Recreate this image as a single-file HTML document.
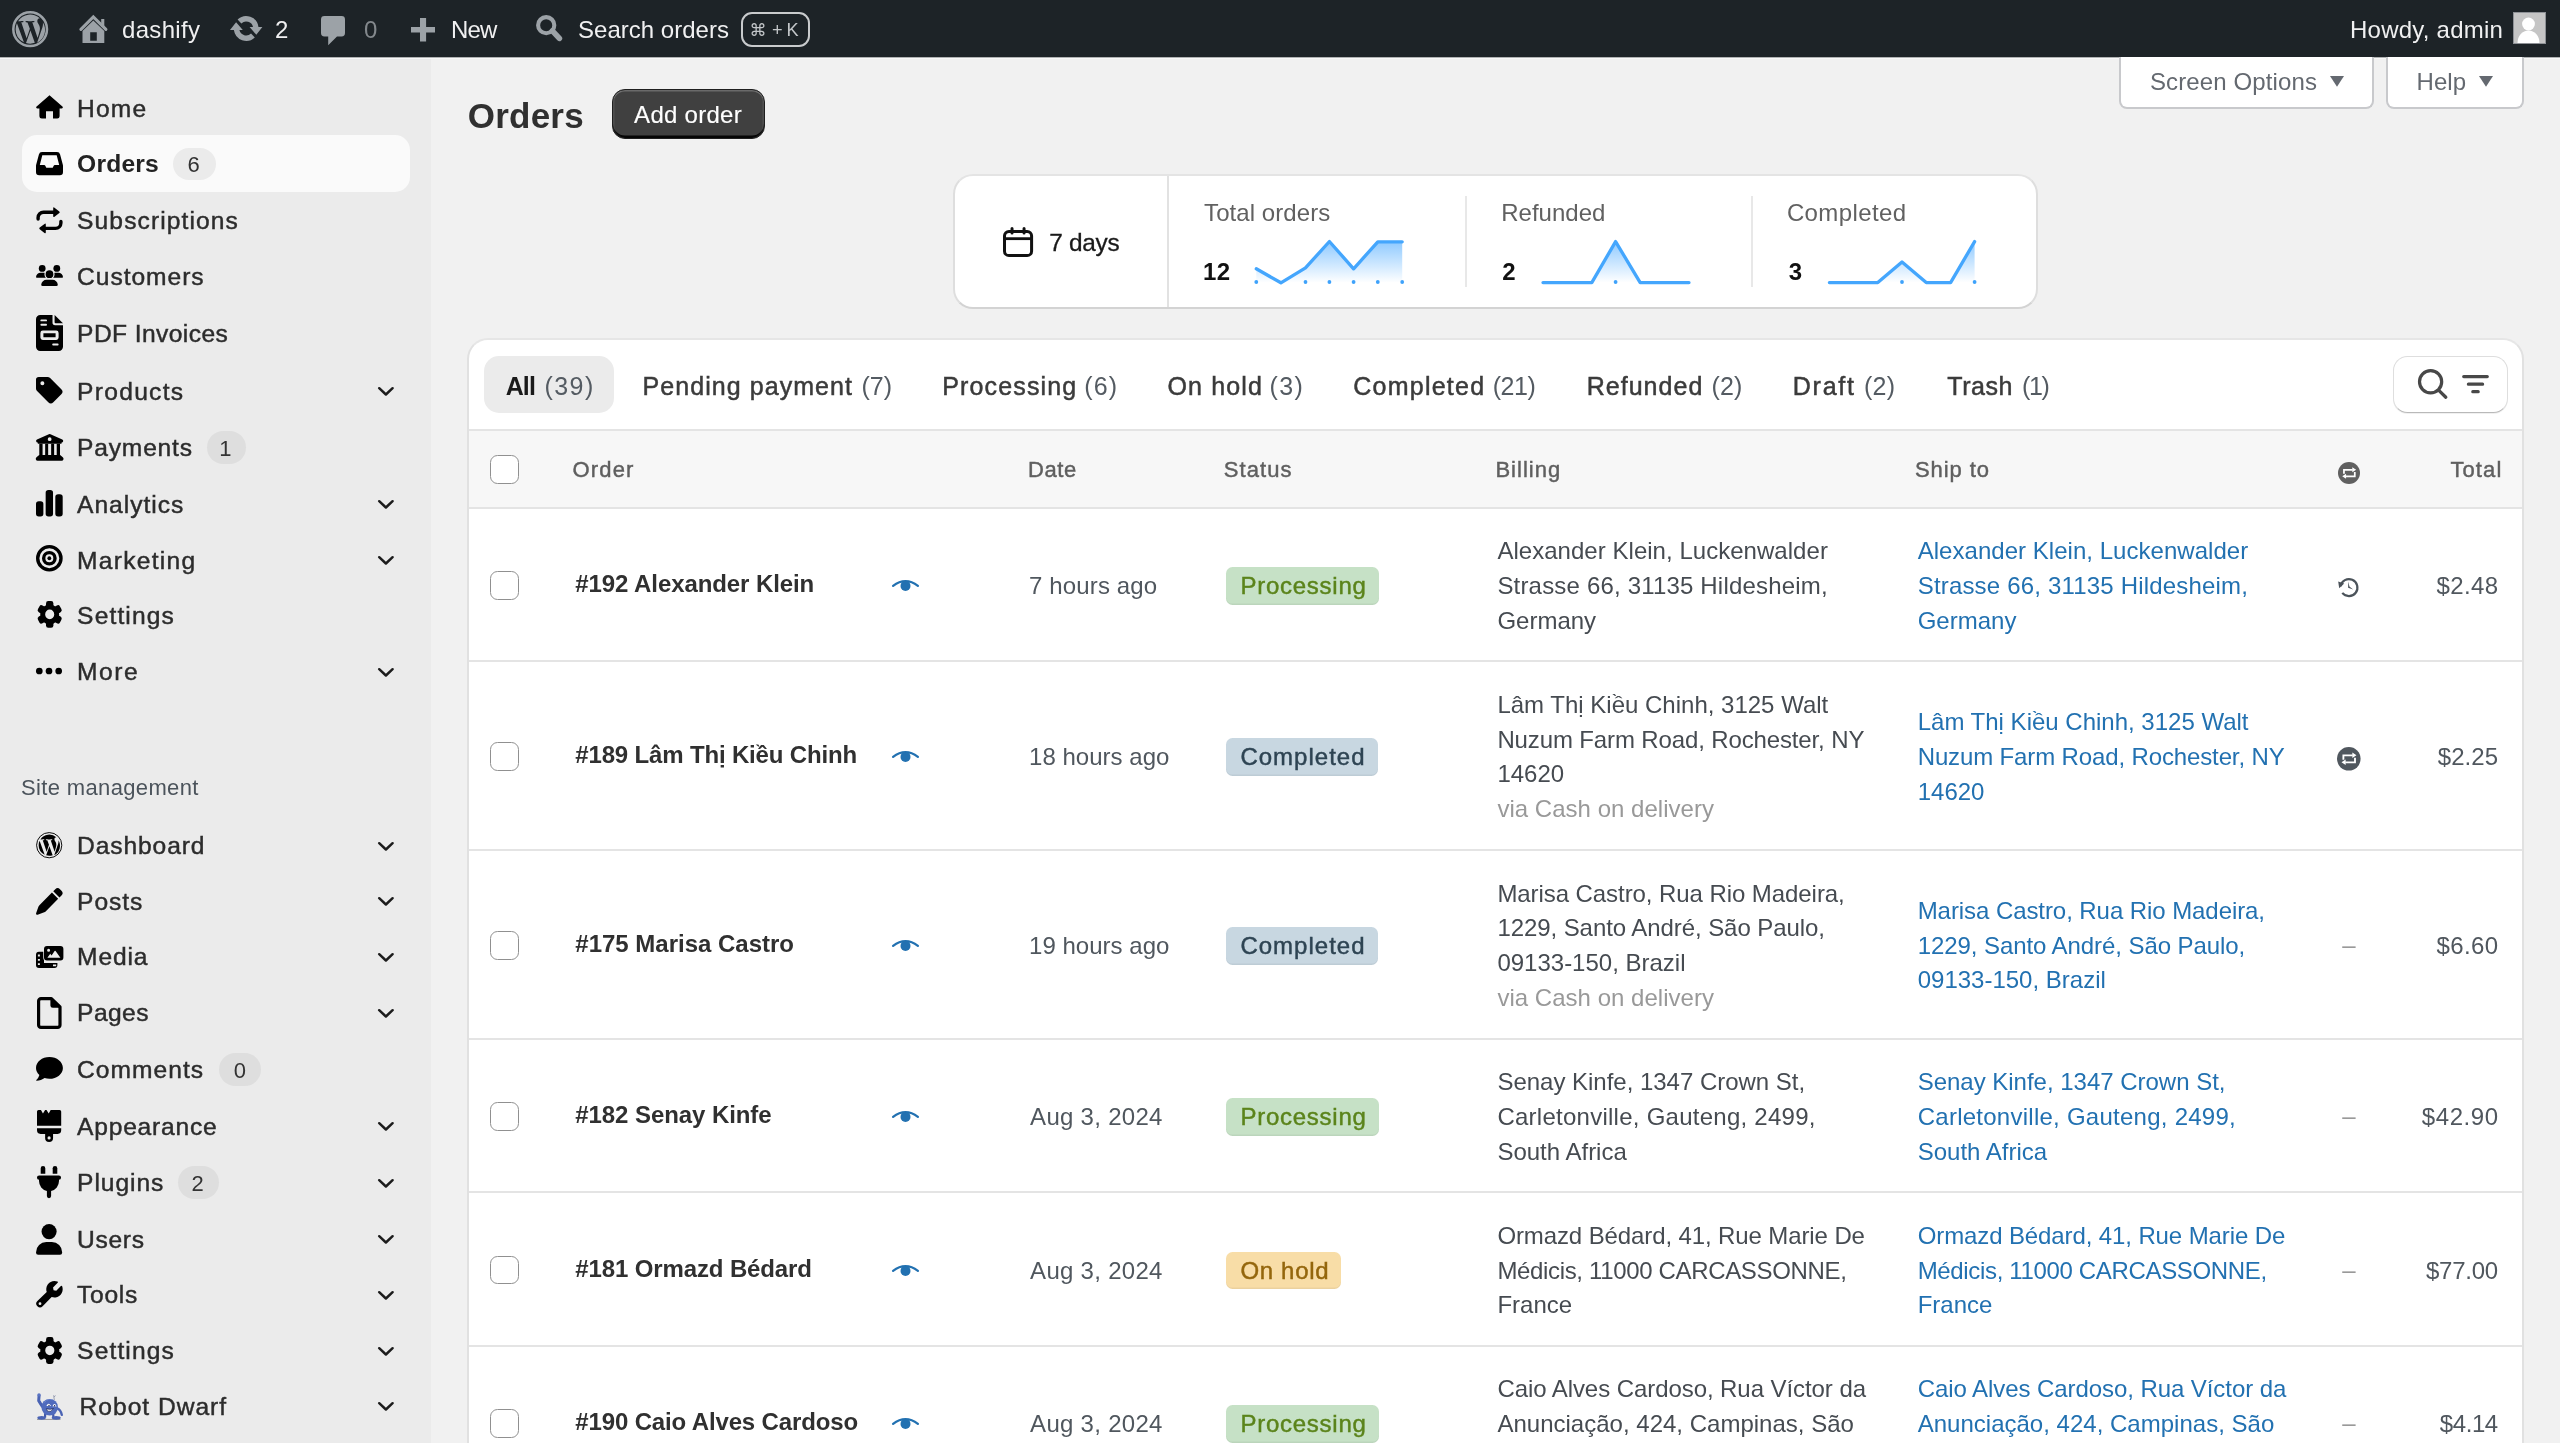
<!DOCTYPE html>
<html lang="en"><head><meta charset="utf-8"><title>Orders ‹ dashify — WordPress</title>
<style>
html,body{margin:0;padding:0}
body{width:2560px;height:1443px;overflow:hidden;position:relative;background:#f1f1f1;font-family:"Liberation Sans", "DejaVu Sans", sans-serif;}
.t{position:absolute;white-space:nowrap;line-height:1;margin:0;padding:0}
#root{position:absolute;left:0;top:0;width:2560px;height:1443px;overflow:hidden;will-change:transform}
.a{position:absolute}
svg{position:absolute;overflow:visible}
</style></head><body>
<div id="root">
<div class="a" style="left:0;top:0;width:2560px;height:57px;background:#1d2327"></div>
<svg style="left:12.40px;top:10.70px" width="36.30" height="36.30" viewBox="0 0 36 36" preserveAspectRatio="none"><circle cx="18" cy="18" r="16.7" fill="none" stroke="#9ca2a7" stroke-width="2.5"/><path d="M3.6,18 A14.4,14.4 0 0 1 4.9,12.1 L11.8,30.9 A14.4,14.4 0 0 1 3.6,18 Z M27.7,17.3 C27.7,15.5 27.1,14.3 26.5,13.3 C25.8,12.1 25.1,11.1 25.1,9.9 C25.1,8.6 26.1,7.3 27.5,7.3 L27.7,7.3 A14.4,14.4 0 0 0 6,10.1 L6.9,10.1 C8.4,10.1 10.8,9.9 10.8,9.9 C11.6,9.9 11.7,11 10.9,11.1 C10.9,11.1 10.1,11.2 9.2,11.2 L14.5,27 L17.7,17.5 L15.4,11.3 C14.6,11.2 13.9,11.1 13.9,11.1 C13.1,11.1 13.2,9.9 14,9.9 C14,9.9 16.4,10.1 17.8,10.1 C19.3,10.1 21.7,9.9 21.7,9.9 C22.5,9.9 22.6,11 21.8,11.1 C21.8,11.1 21,11.2 20.1,11.2 L25.4,26.8 L26.8,22 C27.4,20 27.7,18.6 27.7,17.3 Z M18.3,19.3 L13.9,31.8 A14.4,14.4 0 0 0 22.7,31.6 L22.6,31.4 Z M30.6,11.1 C30.7,11.6 30.7,12.1 30.7,12.7 C30.7,14.3 30.4,16 29.5,18.2 L24.9,31.6 A14.4,14.4 0 0 0 30.6,11.1 Z" fill="#9ca2a7"/></svg>
<svg style="left:80.00px;top:15.00px" width="27.00" height="28.00" viewBox="0 0 27 28" preserveAspectRatio="none"><path d="M0.9,14.3 L13.3,1.9 L25.9,14.3" fill="none" stroke="#9ca2a7" stroke-width="3.1" stroke-linecap="round" stroke-linejoin="miter"/><rect x="21.2" y="4" width="3.1" height="8" fill="#9ca2a7"/><path fill-rule="evenodd" d="M2.5,27.9 V16.1 L13.3,5.6 L24.3,16.1 V27.9 Z M10.2,17.3 V25.8 H16.8 V17.3 Z" fill="#9ca2a7"/></svg>
<svg style="left:230.00px;top:16.30px" width="32.40" height="25.00" viewBox="0 0 32.4 25" preserveAspectRatio="none"><g transform="translate(16.2,12.5)"><path d="M-8.61,-8.92 A12.4,12.4 0 0 1 12.30,-1.6 L16.2,-1.6 L10.1,6.3 L3.4,-1.6 L6.81,-1.6 A7.0,7.0 0 0 0 -4.86,-5.04 Z M8.61,8.92 A12.4,12.4 0 0 1 -12.30,1.6 L-16.2,1.6 L-10.1,-6.3 L-3.4,1.6 L-6.81,1.6 A7.0,7.0 0 0 0 4.86,5.04 Z" fill="#9ca2a7"/></g></svg>
<svg style="left:320.90px;top:15.90px" width="24.00" height="29.20" viewBox="0 0 24 29.2" preserveAspectRatio="none"><path d="M3.4,0 H20.6 A3.4,3.4 0 0 1 24,3.4 V17 A3.4,3.4 0 0 1 20.6,20.4 H16 L7.2,29.2 V20.4 H3.4 A3.4,3.4 0 0 1 0,17 V3.4 A3.4,3.4 0 0 1 3.4,0 Z" fill="#9ca2a7"/></svg>
<svg style="left:410.90px;top:18.10px" width="24.00" height="23.40" viewBox="0 0 24 23.4" preserveAspectRatio="none"><path d="M9,0 H15.1 V8.9 H24 V14.5 H15.1 V23.4 H9 V14.5 H0 V8.9 H9 Z" fill="#9ca2a7"/></svg>
<svg style="left:536.00px;top:15.00px" width="26.00" height="26.60" viewBox="0 0 26 26.6" preserveAspectRatio="none"><circle cx="10.2" cy="10.2" r="8.1" fill="none" stroke="#9ca2a7" stroke-width="4.1"/><path d="M16.4,15.8 L23.4,23.4" stroke="#9ca2a7" stroke-width="5.6" stroke-linecap="round"/></svg>
<div class="a" style="left:741px;top:12.1px;width:68.5px;height:34.9px;box-sizing:border-box;border:2px solid #c9cbcd;border-radius:11px"></div>
<div class="a" style="left:2513.1px;top:11.8px;width:32.8px;height:32px;box-sizing:border-box;background:#c5c5c5;border:1.7px solid #8e9196;overflow:hidden"><svg style="left:0;top:0" width="29.4" height="28.6" viewBox="0 0 29.4 28.6"><circle cx="14.5" cy="11" r="6.4" fill="#fff"/><ellipse cx="14.5" cy="30" rx="11" ry="12.6" fill="#fff"/></svg></div>
<div class="a" style="left:0;top:57px;width:431px;height:1386px;background:#ebebeb"></div>
<div class="a" style="left:0;top:57px;width:2560px;height:1px;background:#b0b2b3"></div>
<div class="a" style="left:0;top:58px;width:2560px;height:1px;background:#f8f8f8"></div>
<div class="a" style="left:21.5px;top:135px;width:388.5px;height:57.2px;background:#fafafa;border-radius:15px"></div>
<svg style="left:35.90px;top:95.00px" width="27.00" height="23.60" viewBox="0 0 27 24" preserveAspectRatio="none"><path d="M13.5,0.3 L26.4,11.6 A1.25,1.25 0 0 1 25.6,13.8 H23.6 V21.6 A2.4,2.4 0 0 1 21.2,24 H17 V16.6 H10 V24 H5.8 A2.4,2.4 0 0 1 3.4,21.6 V13.8 H1.4 A1.25,1.25 0 0 1 0.6,11.6 Z" fill="#000"/></svg>
<svg style="left:35.90px;top:152.00px" width="27.00" height="23.20" viewBox="0 0 27 23.4" preserveAspectRatio="none"><path fill-rule="evenodd" d="M6,0 H21 A3.2,3.2 0 0 1 24.1,2.4 L26.9,13 Q27,13.5 27,14 V20.2 A3.2,3.2 0 0 1 23.8,23.4 H3.2 A3.2,3.2 0 0 1 0,20.2 V14 Q0,13.5 0.1,13 L2.9,2.4 A3.2,3.2 0 0 1 6,0 Z M6.3,3.4 L3.8,13.2 H8.2 A1.2,1.2 0 0 1 9.3,13.9 L10.3,16 H16.7 L17.7,13.9 A1.2,1.2 0 0 1 18.8,13.2 H23.2 L20.7,3.4 Z" fill="#000"/></svg>
<div class="a" style="left:173.0px;top:147.5px;width:43.4px;height:32.8px;border-radius:16.4px;background:#ebebeb"></div>
<svg style="left:36.00px;top:207.00px" width="27.00" height="26.60" viewBox="0 0 27 26.6" preserveAspectRatio="none"><g fill="none" stroke="#000" stroke-width="3.4" stroke-linecap="round" stroke-linejoin="round"><path d="M2.1,12 V10.6 A5.4,5.4 0 0 1 7.5,5.2 H17.6"/><path d="M24.9,14.4 V16 A5.4,5.4 0 0 1 19.5,21.4 H9.4"/></g><path d="M17.2,1.3 Q17.2,-0.3 18.5,0.7 L23.3,4.4 Q24.3,5.2 23.3,6 L18.5,9.7 Q17.2,10.7 17.2,9.1 Z M9.8,17.5 Q9.8,15.9 8.5,16.9 L3.7,20.6 Q2.7,21.4 3.7,22.2 L8.5,25.9 Q9.8,26.9 9.8,25.3 Z" fill="#000"/></svg>
<svg style="left:36.00px;top:265.30px" width="27.00" height="21.10" viewBox="0 0 27 21.2" preserveAspectRatio="none"><g fill="#000"><circle cx="6.2" cy="3.5" r="3.4"/><circle cx="20.8" cy="3.5" r="3.4"/><path d="M0,12.4 A4.7,4.7 0 0 1 4.7,7.7 H7.6 Q8.6,7.7 9.4,8.1 Q8.6,10.4 9.9,12.8 H0.9 A0.9,0.9 0 0 1 0,12.4 Z"/><path d="M27,12.4 A4.7,4.7 0 0 0 22.3,7.7 H19.4 Q18.4,7.7 17.6,8.1 Q18.4,10.4 17.1,12.8 H26.1 A0.9,0.9 0 0 0 27,12.4 Z"/><circle cx="13.5" cy="9.2" r="4.5" stroke="#ebebeb" stroke-width="1.2"/><path d="M5.2,19.8 A5.4,5.4 0 0 1 10.6,14.8 H16.4 A5.4,5.4 0 0 1 21.8,19.8 A1.4,1.4 0 0 1 20.4,21.2 H6.6 A1.4,1.4 0 0 1 5.2,19.8 Z"/></g></svg>
<svg style="left:36.00px;top:315.30px" width="27.00" height="35.90" viewBox="0 0 27 36" preserveAspectRatio="none"><path d="M4.2,0 H16.5 V7.6 A2.6,2.6 0 0 0 19.1,10.2 H27 V31.8 A4.2,4.2 0 0 1 22.8,36 H4.2 A4.2,4.2 0 0 1 0,31.8 V4.2 A4.2,4.2 0 0 1 4.2,0 Z M18.6,0 L27,8.2 H19.6 A1,1 0 0 1 18.6,7.2 Z" fill="#000"/><g fill="#ebebeb"><rect x="4.4" y="4.4" width="6.6" height="1.9" rx="0.9"/><rect x="4.4" y="8.8" width="6.6" height="1.9" rx="0.9"/><rect x="16.2" y="28.6" width="6.4" height="1.9" rx="0.9"/><path fill-rule="evenodd" d="M6.8,15.6 H20.2 A2.4,2.4 0 0 1 22.6,18 V22.6 A2.4,2.4 0 0 1 20.2,25 H6.8 A2.4,2.4 0 0 1 4.4,22.6 V18 A2.4,2.4 0 0 1 6.8,15.6 Z M7.4,18.2 V22.4 H19.6 V18.2 Z"/></g></svg>
<svg style="left:35.70px;top:377.20px" width="26.50" height="26.40" viewBox="0 0 26.6 26.6" preserveAspectRatio="none"><path fill-rule="evenodd" d="M0,2.8 A2.8,2.8 0 0 1 2.8,0 H11.6 A3.6,3.6 0 0 1 14.2,1.1 L25.4,12.3 A3.6,3.6 0 0 1 25.4,17.4 L17.4,25.4 A3.6,3.6 0 0 1 12.3,25.4 L1.1,14.2 A3.6,3.6 0 0 1 0,11.6 Z M6.4,4.4 A2,2 0 1 0 6.4,8.4 A2,2 0 1 0 6.4,4.4 Z" fill="#000"/></svg>
<svg style="left:378.40px;top:387.00px" width="15.80" height="8.90" viewBox="0 0 16 9" preserveAspectRatio="none"><path d="M1.2,1.2 L8,7.6 L14.8,1.2" fill="none" stroke="#1c1c1c" stroke-width="2.5" stroke-linecap="round" stroke-linejoin="round"/></svg>
<svg style="left:35.70px;top:434.20px" width="27.30" height="26.70" viewBox="0 0 27.4 26.8" preserveAspectRatio="none"><path fill-rule="evenodd" d="M12.9,0.2 Q13.7,-0.2 14.5,0.2 L26.4,5.4 A1.7,1.7 0 0 1 25.7,8.6 V9 A0.9,0.9 0 0 1 24.8,9.9 H2.6 A0.9,0.9 0 0 1 1.7,9 V8.6 A1.7,1.7 0 0 1 1,5.4 Z M13.7,3.3 A1.9,1.9 0 1 0 13.7,7.1 A1.9,1.9 0 1 0 13.7,3.3 Z" fill="#000"/><g fill="#000"><rect x="3.3" y="9.8" width="3.3" height="12"/><rect x="9.2" y="9.8" width="3" height="12"/><rect x="15.2" y="9.8" width="3" height="12"/><rect x="20.8" y="9.8" width="3.3" height="12"/><path d="M3.2,21 H24.2 L26.9,23.4 A1.9,1.9 0 0 1 25.7,26.8 H1.7 A1.9,1.9 0 0 1 0.5,23.4 Z"/></g></svg>
<div class="a" style="left:206.8px;top:431.4px;width:39.0px;height:32.8px;border-radius:16.4px;background:#dedede"></div>
<svg style="left:36.00px;top:489.80px" width="26.70" height="26.60" viewBox="0 0 26.8 26.8" preserveAspectRatio="none"><g fill="#000"><rect x="0" y="11.4" width="7.4" height="15.4" rx="2.8"/><rect x="9.7" y="0" width="7.4" height="26.8" rx="2.8"/><rect x="19.4" y="4.2" width="7.4" height="22.6" rx="2.8"/></g></svg>
<svg style="left:378.40px;top:500.10px" width="15.80" height="8.90" viewBox="0 0 16 9" preserveAspectRatio="none"><path d="M1.2,1.2 L8,7.6 L14.8,1.2" fill="none" stroke="#1c1c1c" stroke-width="2.5" stroke-linecap="round" stroke-linejoin="round"/></svg>
<svg style="left:36.00px;top:545.30px" width="26.70" height="26.50" viewBox="0 0 26.8 26.8" preserveAspectRatio="none"><circle cx="13.4" cy="13.4" r="11.7" fill="none" stroke="#000" stroke-width="3.4"/><circle cx="13.4" cy="13.4" r="5.7" fill="none" stroke="#000" stroke-width="3.4"/><circle cx="13.4" cy="13.4" r="1.9" fill="#000"/></svg>
<svg style="left:378.40px;top:556.30px" width="15.80" height="8.90" viewBox="0 0 16 9" preserveAspectRatio="none"><path d="M1.2,1.2 L8,7.6 L14.8,1.2" fill="none" stroke="#1c1c1c" stroke-width="2.5" stroke-linecap="round" stroke-linejoin="round"/></svg>
<svg style="left:36.70px;top:601.10px" width="25.40" height="26.80" viewBox="0 0 26.8 26.8" preserveAspectRatio="none"><circle cx="13.4" cy="13.4" r="7.4" fill="none" stroke="#000" stroke-width="5.2"/><rect x="9.5" y="0" width="7.8" height="8" rx="2.4" fill="#000" transform="rotate(0 13.4 13.4)"/><rect x="9.5" y="0" width="7.8" height="8" rx="2.4" fill="#000" transform="rotate(60 13.4 13.4)"/><rect x="9.5" y="0" width="7.8" height="8" rx="2.4" fill="#000" transform="rotate(120 13.4 13.4)"/><rect x="9.5" y="0" width="7.8" height="8" rx="2.4" fill="#000" transform="rotate(180 13.4 13.4)"/><rect x="9.5" y="0" width="7.8" height="8" rx="2.4" fill="#000" transform="rotate(240 13.4 13.4)"/><rect x="9.5" y="0" width="7.8" height="8" rx="2.4" fill="#000" transform="rotate(300 13.4 13.4)"/></svg>
<svg style="left:36.40px;top:666.50px" width="25.80" height="8.00" viewBox="0 0 25.8 8" preserveAspectRatio="none"><g fill="#000"><circle cx="3.3" cy="4" r="3.35"/><circle cx="13" cy="4" r="3.35"/><circle cx="22.7" cy="4" r="3.35"/></g></svg>
<svg style="left:378.40px;top:667.50px" width="15.80" height="8.90" viewBox="0 0 16 9" preserveAspectRatio="none"><path d="M1.2,1.2 L8,7.6 L14.8,1.2" fill="none" stroke="#1c1c1c" stroke-width="2.5" stroke-linecap="round" stroke-linejoin="round"/></svg>
<svg style="left:36.20px;top:832.40px" width="26.40" height="26.40" viewBox="0 0 36 36" preserveAspectRatio="none"><circle cx="18" cy="18" r="17.2" fill="none" stroke="#000" stroke-width="1.3"/><path d="M3.6,18 A14.4,14.4 0 0 1 4.9,12.1 L11.8,30.9 A14.4,14.4 0 0 1 3.6,18 Z M27.7,17.3 C27.7,15.5 27.1,14.3 26.5,13.3 C25.8,12.1 25.1,11.1 25.1,9.9 C25.1,8.6 26.1,7.3 27.5,7.3 L27.7,7.3 A14.4,14.4 0 0 0 6,10.1 L6.9,10.1 C8.4,10.1 10.8,9.9 10.8,9.9 C11.6,9.9 11.7,11 10.9,11.1 C10.9,11.1 10.1,11.2 9.2,11.2 L14.5,27 L17.7,17.5 L15.4,11.3 C14.6,11.2 13.9,11.1 13.9,11.1 C13.1,11.1 13.2,9.9 14,9.9 C14,9.9 16.4,10.1 17.8,10.1 C19.3,10.1 21.7,9.9 21.7,9.9 C22.5,9.9 22.6,11 21.8,11.1 C21.8,11.1 21,11.2 20.1,11.2 L25.4,26.8 L26.8,22 C27.4,20 27.7,18.6 27.7,17.3 Z M18.3,19.3 L13.9,31.8 A14.4,14.4 0 0 0 22.7,31.6 L22.6,31.4 Z M30.6,11.1 C30.7,11.6 30.7,12.1 30.7,12.7 C30.7,14.3 30.4,16 29.5,18.2 L24.9,31.6 A14.4,14.4 0 0 0 30.6,11.1 Z" fill="#000"/></svg>
<svg style="left:378.40px;top:841.70px" width="15.80" height="8.90" viewBox="0 0 16 9" preserveAspectRatio="none"><path d="M1.2,1.2 L8,7.6 L14.8,1.2" fill="none" stroke="#1c1c1c" stroke-width="2.5" stroke-linecap="round" stroke-linejoin="round"/></svg>
<svg style="left:36.20px;top:887.70px" width="26.70" height="26.90" viewBox="0 0 26.6 26.6" preserveAspectRatio="none"><path d="M19.2,1.2 A3.3,3.3 0 0 1 23.9,1.2 L25.4,2.7 A3.3,3.3 0 0 1 25.4,7.4 L23.4,9.4 L17.2,3.2 Z M15.9,4.5 L22.1,10.7 L9.6,23.2 Q9,23.8 8.2,24.1 L1.6,26.5 A1.2,1.2 0 0 1 0.1,25 L2.5,18.4 Q2.8,17.6 3.4,17 Z" fill="#000"/></svg>
<svg style="left:378.40px;top:897.10px" width="15.80" height="8.90" viewBox="0 0 16 9" preserveAspectRatio="none"><path d="M1.2,1.2 L8,7.6 L14.8,1.2" fill="none" stroke="#1c1c1c" stroke-width="2.5" stroke-linecap="round" stroke-linejoin="round"/></svg>
<svg style="left:35.90px;top:945.90px" width="27.40" height="22.00" viewBox="0 0 27.4 22" preserveAspectRatio="none"><path fill-rule="evenodd" d="M3,5.8 H8 V17 H21.4 V19 A3,3 0 0 1 18.4,22 H3 A3,3 0 0 1 0,19 V8.8 A3,3 0 0 1 3,5.8 Z M1.9,8.6 V10.4 H3.9 V8.6 Z M1.9,12.9 V14.7 H3.9 V12.9 Z M1.9,17.3 V19.1 H3.9 V17.3 Z M17,18.6 V20.2 H19,20.2 V18.6 Z" fill="#000"/><path fill-rule="evenodd" d="M11,0 H24.4 A3,3 0 0 1 27.4,3 V11.6 A3,3 0 0 1 24.4,14.6 H11 A3,3 0 0 1 8,11.6 V3 A3,3 0 0 1 11,0 Z M18.6,5 L15.6,9.4 L14.2,7.8 L11.4,11.8 H24.4 L19.6,5 Q19.1,4.4 18.6,5 Z M12.6,2.8 A1.5,1.5 0 1 0 12.6,5.8 A1.5,1.5 0 1 0 12.6,2.8 Z" fill="#000" stroke="#ebebeb" stroke-width="1.5" paint-order="stroke"/></svg>
<svg style="left:378.40px;top:952.70px" width="15.80" height="8.90" viewBox="0 0 16 9" preserveAspectRatio="none"><path d="M1.2,1.2 L8,7.6 L14.8,1.2" fill="none" stroke="#1c1c1c" stroke-width="2.5" stroke-linecap="round" stroke-linejoin="round"/></svg>
<svg style="left:37.00px;top:996.60px" width="24.60" height="32.00" viewBox="0 0 24.6 32" preserveAspectRatio="none"><path d="M4,1.6 H14.4 L23,10 V27.8 A2.4,2.4 0 0 1 20.6,30.4 H4 A2.4,2.4 0 0 1 1.6,27.8 V4 A2.4,2.4 0 0 1 4,1.6 Z" fill="none" stroke="#000" stroke-width="3.2" stroke-linejoin="round"/><path d="M13.4,1.6 V8.4 A2.4,2.4 0 0 0 15.8,10.8 H23 L14.4,1.6 Z" fill="#000"/></svg>
<svg style="left:378.40px;top:1008.90px" width="15.80" height="8.90" viewBox="0 0 16 9" preserveAspectRatio="none"><path d="M1.2,1.2 L8,7.6 L14.8,1.2" fill="none" stroke="#1c1c1c" stroke-width="2.5" stroke-linecap="round" stroke-linejoin="round"/></svg>
<svg style="left:36.00px;top:1057.30px" width="26.90" height="23.80" viewBox="0 0 26.6 23.6" preserveAspectRatio="none"><path d="M13.3,0 C20.6,0 26.6,4.8 26.6,10.8 C26.6,16.8 20.6,21.6 13.3,21.6 C11.6,21.6 10,21.3 8.5,20.9 C6.4,22.5 3.4,23.5 0.7,23.6 A0.5,0.5 0 0 1 0.3,22.8 C1.7,21.5 2.9,19.4 3.3,17.8 C1.2,15.9 0,13.5 0,10.8 C0,4.8 6,0 13.3,0 Z" fill="#000"/></svg>
<div class="a" style="left:218.8px;top:1053.2px;width:41.9px;height:32.8px;border-radius:16.4px;background:#dedede"></div>
<svg style="left:37.30px;top:1109.70px" width="24.20" height="32.10" viewBox="0 0 24.4 32.2" preserveAspectRatio="none"><path d="M1.6,0 H4 L6,3.6 L8.2,0 H9.6 L11.8,3.6 L13.8,0 H22.8 A1.6,1.6 0 0 1 24.4,1.6 V15.8 H0 V1.6 A1.6,1.6 0 0 1 1.6,0 Z" fill="#000"/><path fill-rule="evenodd" d="M0,18.4 H24.4 V20.4 A3.6,3.6 0 0 1 20.8,24 H16.2 V28.2 A4,4 0 0 1 8.2,28.2 V24 H3.6 A3.6,3.6 0 0 1 0,20.4 Z M12.2,26.4 A1.6,1.6 0 1 0 12.2,29.6 A1.6,1.6 0 1 0 12.2,26.4 Z" fill="#000"/></svg>
<svg style="left:378.40px;top:1122.40px" width="15.80" height="8.90" viewBox="0 0 16 9" preserveAspectRatio="none"><path d="M1.2,1.2 L8,7.6 L14.8,1.2" fill="none" stroke="#1c1c1c" stroke-width="2.5" stroke-linecap="round" stroke-linejoin="round"/></svg>
<svg style="left:37.40px;top:1166.40px" width="24.00" height="32.20" viewBox="0 0 24 32" preserveAspectRatio="none"><g fill="#000"><path d="M3.7,2.3 A2.3,2.3 0 0 1 8.3,2.3 V7.8 H3.7 Z"/><path d="M15.7,2.3 A2.3,2.3 0 0 1 20.3,2.3 V7.8 H15.7 Z"/><rect x="0" y="9.4" width="24" height="4.3" rx="2.1"/><path d="M2,12.6 H22 V15 A10,10 0 0 1 14.1,24.8 V29.9 A2.1,2.1 0 0 1 9.9,29.9 V24.8 A10,10 0 0 1 2,15 Z"/></g></svg>
<svg style="left:378.40px;top:1178.50px" width="15.80" height="8.90" viewBox="0 0 16 9" preserveAspectRatio="none"><path d="M1.2,1.2 L8,7.6 L14.8,1.2" fill="none" stroke="#1c1c1c" stroke-width="2.5" stroke-linecap="round" stroke-linejoin="round"/></svg>
<div class="a" style="left:177.9px;top:1166.2px;width:41.6px;height:32.8px;border-radius:16.4px;background:#dedede"></div>
<svg style="left:36.20px;top:1223.90px" width="26.20" height="30.70" viewBox="0 0 26.4 30.6" preserveAspectRatio="none"><g fill="#000"><circle cx="13.2" cy="7.6" r="7.6"/><path d="M0,28.4 A10.4,10.4 0 0 1 10.4,18 H16 A10.4,10.4 0 0 1 26.4,28.4 A2.2,2.2 0 0 1 24.2,30.6 H2.2 A2.2,2.2 0 0 1 0,28.4 Z"/></g></svg>
<svg style="left:378.40px;top:1235.10px" width="15.80" height="8.90" viewBox="0 0 16 9" preserveAspectRatio="none"><path d="M1.2,1.2 L8,7.6 L14.8,1.2" fill="none" stroke="#1c1c1c" stroke-width="2.5" stroke-linecap="round" stroke-linejoin="round"/></svg>
<svg style="left:36.20px;top:1281.30px" width="26.70" height="26.70" viewBox="0 0 26.6 26.6" preserveAspectRatio="none"><path fill-rule="evenodd" d="M18.4,0 C19.4,0 20.4,0.2 21.3,0.5 A0.8,0.8 0 0 1 21.6,1.8 L17,6.4 L17.5,9.1 L20.2,9.6 L24.8,5 A0.8,0.8 0 0 1 26.1,5.3 C26.4,6.2 26.6,7.2 26.6,8.2 A8.2,8.2 0 0 1 15.6,15.9 L6.6,25.2 A3.6,3.6 0 0 1 1.4,20 L10.7,11 A8.2,8.2 0 0 1 18.4,0 Z M4,21.2 A1.4,1.4 0 1 0 4,24 A1.4,1.4 0 1 0 4,21.2 Z" fill="#000"/></svg>
<svg style="left:378.40px;top:1290.80px" width="15.80" height="8.90" viewBox="0 0 16 9" preserveAspectRatio="none"><path d="M1.2,1.2 L8,7.6 L14.8,1.2" fill="none" stroke="#1c1c1c" stroke-width="2.5" stroke-linecap="round" stroke-linejoin="round"/></svg>
<svg style="left:36.60px;top:1337.00px" width="25.60" height="26.90" viewBox="0 0 26.8 26.8" preserveAspectRatio="none"><circle cx="13.4" cy="13.4" r="7.4" fill="none" stroke="#000" stroke-width="5.2"/><rect x="9.5" y="0" width="7.8" height="8" rx="2.4" fill="#000" transform="rotate(0 13.4 13.4)"/><rect x="9.5" y="0" width="7.8" height="8" rx="2.4" fill="#000" transform="rotate(60 13.4 13.4)"/><rect x="9.5" y="0" width="7.8" height="8" rx="2.4" fill="#000" transform="rotate(120 13.4 13.4)"/><rect x="9.5" y="0" width="7.8" height="8" rx="2.4" fill="#000" transform="rotate(180 13.4 13.4)"/><rect x="9.5" y="0" width="7.8" height="8" rx="2.4" fill="#000" transform="rotate(240 13.4 13.4)"/><rect x="9.5" y="0" width="7.8" height="8" rx="2.4" fill="#000" transform="rotate(300 13.4 13.4)"/></svg>
<svg style="left:378.40px;top:1346.60px" width="15.80" height="8.90" viewBox="0 0 16 9" preserveAspectRatio="none"><path d="M1.2,1.2 L8,7.6 L14.8,1.2" fill="none" stroke="#1c1c1c" stroke-width="2.5" stroke-linecap="round" stroke-linejoin="round"/></svg>
<svg style="left:35.80px;top:1392.70px" width="27.00" height="27.10" viewBox="0 0 27 27" preserveAspectRatio="none"><g><path d="M1,26.3 H24.5" stroke="#3a3a3a" stroke-width=".8" opacity=".6"/><path d="M5.8,12.8 L2.7,7.6 L3.1,2.4" fill="none" stroke="#4a63b4" stroke-width="3" stroke-linecap="round" stroke-linejoin="round"/><circle cx="3" cy="1.9" r="1.7" fill="#5a74c2"/><path d="M18.3,7 L17.7,2.2 M17.9,4 L19.6,2.6" stroke="#8890a8" stroke-width=".8" fill="none"/><path d="M20.6,15 Q24.8,16.4 25.8,21.8" fill="none" stroke="#4a63b4" stroke-width="2.4" stroke-linecap="round"/><rect x="8" y="20.4" width="2.2" height="4" fill="#435aa8"/><rect x="16.2" y="20.4" width="2.2" height="4" fill="#435aa8"/><ellipse cx="5.6" cy="24.7" rx="4.3" ry="1.9" fill="#4a63b4"/><ellipse cx="20.2" cy="24.7" rx="4.5" ry="1.9" fill="#4a63b4"/><circle cx="13.7" cy="14.2" r="8.3" fill="#506bbd"/><path d="M7,11 A8.3,8.3 0 0 1 18,7.2 A10,10 0 0 0 7,11 Z" fill="#7c93d6"/><path d="M10.4,13 Q12.6,8.2 15,13 Z" fill="#fff"/><path d="M16.4,13.2 Q18.6,8.8 20.6,13.4 Z" fill="#fff"/><circle cx="13" cy="12.4" r=".7" fill="#1c2550"/><circle cx="18.6" cy="12.7" r=".7" fill="#1c2550"/><path d="M10.4,15.6 Q14,17 17.6,15.4 Q15.2,19.6 11.6,18.2 Z" fill="#fff" stroke="#1c2550" stroke-width=".7"/></g></svg>
<svg style="left:378.40px;top:1402.30px" width="15.80" height="8.90" viewBox="0 0 16 9" preserveAspectRatio="none"><path d="M1.2,1.2 L8,7.6 L14.8,1.2" fill="none" stroke="#1c1c1c" stroke-width="2.5" stroke-linecap="round" stroke-linejoin="round"/></svg>
<div class="a" style="left:611.6px;top:88.7px;width:153.3px;height:50.3px;box-sizing:border-box;background:#404040;border-radius:13px;box-shadow:inset 0 1.6px 0 rgba(255,255,255,.22),inset 1.6px 0 0 rgba(255,255,255,.08),inset -1.6px 0 0 rgba(255,255,255,.08),inset 0 -2.6px 0 #050505;border:1.6px solid #1f1f1f"></div>
<div class="a" style="left:2119.4px;top:57px;width:255.0px;height:51.7px;box-sizing:border-box;background:#fff;border:2px solid #c8c9cc;border-top:none;border-radius:0 0 8px 8px"></div>
<svg style="left:2330.4px;top:76.4px" width="14" height="10.8" viewBox="0 0 14 10.8"><path d="M0,0 H14 L7,10.8 Z" fill="#646970"/></svg>
<div class="a" style="left:2386.0px;top:57px;width:137.7px;height:51.7px;box-sizing:border-box;background:#fff;border:2px solid #c8c9cc;border-top:none;border-radius:0 0 8px 8px"></div>
<svg style="left:2479.1px;top:76.4px" width="14" height="10.8" viewBox="0 0 14 10.8"><path d="M0,0 H14 L7,10.8 Z" fill="#646970"/></svg>
<div class="a" style="left:953px;top:174px;width:1085px;height:135px;box-sizing:border-box;background:#fff;border:2px solid #dedede;border-top-color:#e4e4e4;border-bottom-color:#d3d3d3;border-radius:20px"></div>
<div class="a" style="left:1167px;top:176px;width:2px;height:131px;background:#e2e2e2"></div>
<div class="a" style="left:1465px;top:196px;width:2px;height:91px;background:#e8e8e8"></div>
<div class="a" style="left:1751px;top:196px;width:2px;height:91px;background:#e8e8e8"></div>
<svg style="left:1002.60px;top:226.90px" width="30.10" height="30.20" viewBox="0 0 30 30" preserveAspectRatio="none"><rect x="1.5" y="4.4" width="27" height="24" rx="4.4" fill="none" stroke="#111" stroke-width="3"/><path d="M1.8,11.6 H28.2" stroke="#111" stroke-width="2.8"/><path d="M9,1.4 V6 M21,1.4 V6" stroke="#111" stroke-width="3" stroke-linecap="round"/></svg>
<svg style="left:0;top:0" width="2560" height="320" viewBox="0 0 2560 320"><defs><linearGradient id="ga" x1="0" y1="0" x2="0" y2="1"><stop offset="0" stop-color="#4aa9ff" stop-opacity=".62"/><stop offset="1" stop-color="#4aa9ff" stop-opacity="0"/></linearGradient></defs><path d="M1256.3,268.8 L1280.9,282.8 L1305.5,267.9 L1329.4,241.5 L1353.6,268.8 L1377.8,241.8 L1402.2,241.8 L1402.2,282.6 L1256.3,282.6 Z" fill="url(#ga)"/><circle cx="1256.3" cy="282.0" r="1.9" fill="#3ea2fb"/><circle cx="1305.5" cy="282.0" r="1.9" fill="#3ea2fb"/><circle cx="1329.4" cy="282.0" r="1.9" fill="#3ea2fb"/><circle cx="1353.6" cy="282.0" r="1.9" fill="#3ea2fb"/><circle cx="1377.8" cy="282.0" r="1.9" fill="#3ea2fb"/><circle cx="1402.2" cy="282.0" r="1.9" fill="#3ea2fb"/><path d="M1256.3,268.8 L1280.9,282.8 L1305.5,267.9 L1329.4,241.5 L1353.6,268.8 L1377.8,241.8 L1402.2,241.8" fill="none" stroke="#44a6fd" stroke-width="3.3" stroke-linejoin="round" stroke-linecap="round"/></svg>
<svg style="left:0;top:0" width="2560" height="320" viewBox="0 0 2560 320"><defs><linearGradient id="gb" x1="0" y1="0" x2="0" y2="1"><stop offset="0" stop-color="#4aa9ff" stop-opacity=".62"/><stop offset="1" stop-color="#4aa9ff" stop-opacity="0"/></linearGradient></defs><path d="M1543.0,282.6 L1567.4,282.6 L1591.8,282.6 L1615.6,241.6 L1640.2,282.6 L1664.6,282.6 L1689.0,282.6 L1689.0,282.6 L1543.0,282.6 Z" fill="url(#gb)"/><circle cx="1615.6" cy="282.0" r="1.9" fill="#3ea2fb"/><path d="M1543.0,282.6 L1567.4,282.6 L1591.8,282.6 L1615.6,241.6 L1640.2,282.6 L1664.6,282.6 L1689.0,282.6" fill="none" stroke="#44a6fd" stroke-width="3.3" stroke-linejoin="round" stroke-linecap="round"/></svg>
<svg style="left:0;top:0" width="2560" height="320" viewBox="0 0 2560 320"><defs><linearGradient id="gc" x1="0" y1="0" x2="0" y2="1"><stop offset="0" stop-color="#4aa9ff" stop-opacity=".62"/><stop offset="1" stop-color="#4aa9ff" stop-opacity="0"/></linearGradient></defs><path d="M1829.4,282.6 L1853.6,282.6 L1877.8,282.6 L1902.0,262.0 L1926.2,282.6 L1950.6,282.6 L1974.6,241.6 L1974.6,282.6 L1829.4,282.6 Z" fill="url(#gc)"/><circle cx="1902.0" cy="282.0" r="1.9" fill="#3ea2fb"/><circle cx="1974.6" cy="282.0" r="1.9" fill="#3ea2fb"/><path d="M1829.4,282.6 L1853.6,282.6 L1877.8,282.6 L1902.0,262.0 L1926.2,282.6 L1950.6,282.6 L1974.6,241.6" fill="none" stroke="#44a6fd" stroke-width="3.3" stroke-linejoin="round" stroke-linecap="round"/></svg>
<div class="a" style="left:467px;top:338px;width:2057px;height:1200px;box-sizing:border-box;background:#fff;border:2px solid #e1e1e1;border-top-color:#e6e6e6;border-radius:21px"></div>
<div class="a" style="left:469px;top:431px;width:2053px;height:76px;background:#f7f7f7"></div>
<div class="a" style="left:469px;top:429px;width:2053px;height:2px;background:#e4e4e4"></div>
<div class="a" style="left:469px;top:507px;width:2053px;height:2px;background:#e4e4e4"></div>
<div class="a" style="left:469px;top:660px;width:2053px;height:2px;background:#e4e4e4"></div>
<div class="a" style="left:469px;top:849px;width:2053px;height:2px;background:#e4e4e4"></div>
<div class="a" style="left:469px;top:1038px;width:2053px;height:2px;background:#e4e4e4"></div>
<div class="a" style="left:469px;top:1191px;width:2053px;height:2px;background:#e4e4e4"></div>
<div class="a" style="left:469px;top:1345px;width:2053px;height:2px;background:#e4e4e4"></div>
<div class="a" style="left:483.6px;top:355.7px;width:130.4px;height:57.6px;background:#ebebeb;border-radius:15px"></div>
<div class="a" style="left:2393px;top:356px;width:115px;height:57px;box-sizing:border-box;background:#fff;border:1.6px solid #dedede;border-bottom-color:#b9b9b9;border-radius:14.5px;box-shadow:0 1px 0 rgba(0,0,0,.06)"></div>
<svg style="left:2417.50px;top:369.30px" width="30.00" height="30.30" viewBox="0 0 30 30.3" preserveAspectRatio="none"><circle cx="12.6" cy="12.75" r="11.1" fill="none" stroke="#484848" stroke-width="3.2"/><path d="M20.8,21.4 L27.8,28.2" stroke="#484848" stroke-width="3.3" stroke-linecap="round"/></svg>
<svg style="left:2462.00px;top:375.30px" width="27.00" height="18.30" viewBox="0 0 27 18.3" preserveAspectRatio="none"><path d="M1.7,1.6 H25.3 M6.4,9.2 H20.6 M10.8,16.7 H16.2" stroke="#484848" stroke-width="3.2" stroke-linecap="round"/></svg>
<div class="a" style="left:490.2px;top:455.2px;width:28.8px;height:28.8px;box-sizing:border-box;background:#fff;border:1.5px solid #909090;border-radius:7.5px"></div>
<svg style="left:2338.10px;top:461.90px" width="22.00" height="22.00" viewBox="0 0 24 24" preserveAspectRatio="none"><circle cx="12" cy="12" r="12" fill="#606060"/><g fill="none" stroke="#fff" stroke-width="1.9" stroke-linejoin="miter"><path d="M6.5,12.9 V8.5 H16"/><path d="M18.3,10.9 V15.6 H8.4"/></g><path d="M15.6,5.7 L19.8,8.5 L15.6,11.3 Z M8.8,12.8 L4.6,15.6 L8.8,18.4 Z" fill="#fff"/></svg>
<div class="a" style="left:490.2px;top:571.1px;width:28.8px;height:28.8px;box-sizing:border-box;background:#fff;border:1.5px solid #909090;border-radius:7.5px"></div>
<svg style="left:892.10px;top:579.10px" width="27.00" height="12.00" viewBox="0 0 27 12" preserveAspectRatio="none"><path d="M1.1,6.9 Q13.5,-2.6 25.9,6.9" fill="none" stroke="#2271b1" stroke-width="2.3" stroke-linecap="round"/><circle cx="13.5" cy="6.9" r="5" fill="#2271b1"/></svg>
<div class="a" style="left:1226.2px;top:567.1px;width:152.8px;height:37.8px;background:#c6e1c6;border-radius:6.5px;box-shadow:inset 0 -1.4px 0 rgba(0,0,0,.05)"></div>
<svg style="left:2338.40px;top:577.35px" width="20.60" height="20.40" viewBox="0 0 20.6 20.4" preserveAspectRatio="none"><path d="M2.55,9.2 A8.5,8.5 0 1 1 4.3,15.9" fill="none" stroke="#4b535a" stroke-width="2.2"/><path d="M0.2,4.6 L6.2,6.6 L1.2,11.2 Z" fill="#4b535a"/><path d="M10.3,4.6 L11.4,9.6 L15.2,12.6 L10.1,10.8 Z" fill="#4b535a"/></svg>
<div class="a" style="left:490.2px;top:742.0px;width:28.8px;height:28.8px;box-sizing:border-box;background:#fff;border:1.5px solid #909090;border-radius:7.5px"></div>
<svg style="left:892.10px;top:750.00px" width="27.00" height="12.00" viewBox="0 0 27 12" preserveAspectRatio="none"><path d="M1.1,6.9 Q13.5,-2.6 25.9,6.9" fill="none" stroke="#2271b1" stroke-width="2.3" stroke-linecap="round"/><circle cx="13.5" cy="6.9" r="5" fill="#2271b1"/></svg>
<div class="a" style="left:1226.2px;top:738.0px;width:151.5px;height:37.8px;background:#c8d7e1;border-radius:6.5px;box-shadow:inset 0 -1.4px 0 rgba(0,0,0,.05)"></div>
<svg style="left:2337.40px;top:746.90px" width="23.60" height="23.60" viewBox="0 0 24 24" preserveAspectRatio="none"><circle cx="12" cy="12" r="12" fill="#50575e"/><g fill="none" stroke="#fff" stroke-width="1.9" stroke-linejoin="miter"><path d="M6.5,12.9 V8.5 H16"/><path d="M18.3,10.9 V15.6 H8.4"/></g><path d="M15.6,5.7 L19.8,8.5 L15.6,11.3 Z M8.8,12.8 L4.6,15.6 L8.8,18.4 Z" fill="#fff"/></svg>
<div class="a" style="left:490.2px;top:930.9px;width:28.8px;height:28.8px;box-sizing:border-box;background:#fff;border:1.5px solid #909090;border-radius:7.5px"></div>
<svg style="left:892.10px;top:938.90px" width="27.00" height="12.00" viewBox="0 0 27 12" preserveAspectRatio="none"><path d="M1.1,6.9 Q13.5,-2.6 25.9,6.9" fill="none" stroke="#2271b1" stroke-width="2.3" stroke-linecap="round"/><circle cx="13.5" cy="6.9" r="5" fill="#2271b1"/></svg>
<div class="a" style="left:1226.2px;top:926.9px;width:151.5px;height:37.8px;background:#c8d7e1;border-radius:6.5px;box-shadow:inset 0 -1.4px 0 rgba(0,0,0,.05)"></div>
<div class="a" style="left:490.2px;top:1102.1px;width:28.8px;height:28.8px;box-sizing:border-box;background:#fff;border:1.5px solid #909090;border-radius:7.5px"></div>
<svg style="left:892.10px;top:1110.10px" width="27.00" height="12.00" viewBox="0 0 27 12" preserveAspectRatio="none"><path d="M1.1,6.9 Q13.5,-2.6 25.9,6.9" fill="none" stroke="#2271b1" stroke-width="2.3" stroke-linecap="round"/><circle cx="13.5" cy="6.9" r="5" fill="#2271b1"/></svg>
<div class="a" style="left:1226.2px;top:1098.0px;width:152.8px;height:37.8px;background:#c6e1c6;border-radius:6.5px;box-shadow:inset 0 -1.4px 0 rgba(0,0,0,.05)"></div>
<div class="a" style="left:490.2px;top:1255.7px;width:28.8px;height:28.8px;box-sizing:border-box;background:#fff;border:1.5px solid #909090;border-radius:7.5px"></div>
<svg style="left:892.10px;top:1263.70px" width="27.00" height="12.00" viewBox="0 0 27 12" preserveAspectRatio="none"><path d="M1.1,6.9 Q13.5,-2.6 25.9,6.9" fill="none" stroke="#2271b1" stroke-width="2.3" stroke-linecap="round"/><circle cx="13.5" cy="6.9" r="5" fill="#2271b1"/></svg>
<div class="a" style="left:1226.2px;top:1251.6px;width:115.2px;height:37.8px;background:#f8dda7;border-radius:6.5px;box-shadow:inset 0 -1.4px 0 rgba(0,0,0,.05)"></div>
<div class="a" style="left:490.2px;top:1409.2px;width:28.8px;height:28.8px;box-sizing:border-box;background:#fff;border:1.5px solid #909090;border-radius:7.5px"></div>
<svg style="left:892.10px;top:1417.20px" width="27.00" height="12.00" viewBox="0 0 27 12" preserveAspectRatio="none"><path d="M1.1,6.9 Q13.5,-2.6 25.9,6.9" fill="none" stroke="#2271b1" stroke-width="2.3" stroke-linecap="round"/><circle cx="13.5" cy="6.9" r="5" fill="#2271b1"/></svg>
<div class="a" style="left:1226.2px;top:1405.1px;width:152.8px;height:37.8px;background:#c6e1c6;border-radius:6.5px;box-shadow:inset 0 -1.4px 0 rgba(0,0,0,.05)"></div>
<span class="t" id="ab1" style="left:122.00px;top:18px;font-size:24.00px;color:#f0f0f1;letter-spacing:0.326px;">dashify</span>
<span class="t" id="ab2" style="left:275.00px;top:18px;font-size:24.00px;color:#f0f0f1;">2</span>
<span class="t" id="ab3" style="left:364.00px;top:18px;font-size:24.00px;color:#83888c;">0</span>
<span class="t" id="ab4" style="left:451.00px;top:18px;font-size:24.00px;color:#f0f0f1;letter-spacing:-0.840px;">New</span>
<span class="t" id="ab5" style="left:578.00px;top:18px;font-size:24.00px;color:#f0f0f1;letter-spacing:0.022px;">Search orders</span>
<span class="t" id="ab6a" style="left:749.60px;top:22px;font-size:17.00px;color:#c3c6c9;font-family:"DejaVu Sans", sans-serif;">⌘</span>
<span class="t" id="ab6b" style="left:772.00px;top:21px;font-size:18.20px;color:#c3c6c9;letter-spacing:-0.587px;">+ K</span>
<span class="t" id="ab7" style="left:2350.00px;top:18px;font-size:24.00px;color:#f0f0f1;letter-spacing:0.242px;">Howdy, admin</span>
<span class="t" id="sb0" style="left:77.10px;top:97px;font-size:24.60px;color:#2c2c2c;letter-spacing:1.158px;-webkit-text-stroke:0.45px #2c2c2c;">Home</span>
<span class="t" id="sb1" style="left:77.10px;top:152px;font-size:24.60px;color:#222;font-weight:700;letter-spacing:0.206px;">Orders</span>
<span class="t" id="sbb1" style="left:187.60px;top:154px;font-size:22.00px;color:#333;">6</span>
<span class="t" id="sb2" style="left:77.10px;top:209px;font-size:24.60px;color:#2c2c2c;letter-spacing:1.097px;-webkit-text-stroke:0.45px #2c2c2c;">Subscriptions</span>
<span class="t" id="sb3" style="left:77.10px;top:265px;font-size:24.60px;color:#2c2c2c;letter-spacing:0.950px;-webkit-text-stroke:0.45px #2c2c2c;">Customers</span>
<span class="t" id="sb4" style="left:77.10px;top:322px;font-size:24.60px;color:#2c2c2c;letter-spacing:0.405px;-webkit-text-stroke:0.45px #2c2c2c;">PDF Invoices</span>
<span class="t" id="sb5" style="left:77.10px;top:380px;font-size:24.60px;color:#2c2c2c;letter-spacing:1.278px;-webkit-text-stroke:0.45px #2c2c2c;">Products</span>
<span class="t" id="sb6" style="left:77.10px;top:436px;font-size:24.60px;color:#2c2c2c;letter-spacing:0.792px;-webkit-text-stroke:0.45px #2c2c2c;">Payments</span>
<span class="t" id="sbb6" style="left:219.20px;top:438px;font-size:22.00px;color:#333;">1</span>
<span class="t" id="sb7" style="left:77.10px;top:493px;font-size:24.60px;color:#2c2c2c;letter-spacing:0.961px;-webkit-text-stroke:0.45px #2c2c2c;">Analytics</span>
<span class="t" id="sb8" style="left:77.10px;top:549px;font-size:24.60px;color:#2c2c2c;letter-spacing:1.262px;-webkit-text-stroke:0.45px #2c2c2c;">Marketing</span>
<span class="t" id="sb9" style="left:77.10px;top:604px;font-size:24.60px;color:#2c2c2c;letter-spacing:1.133px;-webkit-text-stroke:0.45px #2c2c2c;">Settings</span>
<span class="t" id="sb10" style="left:77.10px;top:660px;font-size:24.60px;color:#2c2c2c;letter-spacing:1.482px;-webkit-text-stroke:0.45px #2c2c2c;">More</span>
<span class="t" id="sb11" style="left:77.10px;top:834px;font-size:24.60px;color:#2c2c2c;letter-spacing:0.883px;-webkit-text-stroke:0.45px #2c2c2c;">Dashboard</span>
<span class="t" id="sb12" style="left:77.10px;top:890px;font-size:24.60px;color:#2c2c2c;letter-spacing:0.897px;-webkit-text-stroke:0.45px #2c2c2c;">Posts</span>
<span class="t" id="sb13" style="left:77.10px;top:945px;font-size:24.60px;color:#2c2c2c;letter-spacing:0.823px;-webkit-text-stroke:0.45px #2c2c2c;">Media</span>
<span class="t" id="sb14" style="left:77.10px;top:1001px;font-size:24.60px;color:#2c2c2c;letter-spacing:0.416px;-webkit-text-stroke:0.45px #2c2c2c;">Pages</span>
<span class="t" id="sb15" style="left:77.10px;top:1058px;font-size:24.60px;color:#2c2c2c;letter-spacing:1.014px;-webkit-text-stroke:0.45px #2c2c2c;">Comments</span>
<span class="t" id="sbb15" style="left:233.65px;top:1060px;font-size:22.00px;color:#333;">0</span>
<span class="t" id="sb16" style="left:77.10px;top:1115px;font-size:24.60px;color:#2c2c2c;letter-spacing:0.771px;-webkit-text-stroke:0.45px #2c2c2c;">Appearance</span>
<span class="t" id="sb17" style="left:77.10px;top:1171px;font-size:24.60px;color:#2c2c2c;letter-spacing:0.939px;-webkit-text-stroke:0.45px #2c2c2c;">Plugins</span>
<span class="t" id="sbb17" style="left:191.60px;top:1173px;font-size:22.00px;color:#333;">2</span>
<span class="t" id="sb18" style="left:77.10px;top:1228px;font-size:24.60px;color:#2c2c2c;letter-spacing:0.669px;-webkit-text-stroke:0.45px #2c2c2c;">Users</span>
<span class="t" id="sb19" style="left:77.10px;top:1283px;font-size:24.60px;color:#2c2c2c;letter-spacing:0.671px;-webkit-text-stroke:0.45px #2c2c2c;">Tools</span>
<span class="t" id="sb20" style="left:77.10px;top:1339px;font-size:24.60px;color:#2c2c2c;letter-spacing:1.133px;-webkit-text-stroke:0.45px #2c2c2c;">Settings</span>
<span class="t" id="sb21" style="left:79.60px;top:1395px;font-size:24.60px;color:#2c2c2c;letter-spacing:0.975px;-webkit-text-stroke:0.45px #2c2c2c;">Robot Dwarf</span>
<span class="t" id="sm" style="left:21.00px;top:777px;font-size:22.00px;color:#4b535b;letter-spacing:0.356px;">Site management</span>
<span class="t" id="h1" style="left:467.80px;top:98px;font-size:35.00px;color:#303030;font-weight:700;letter-spacing:0.218px;">Orders</span>
<span class="t" id="addo" style="left:634.10px;top:103px;font-size:24.00px;color:#fff;letter-spacing:0.274px;-webkit-text-stroke:0.15px #fff;">Add order</span>
<span class="t" id="so" style="left:2149.90px;top:70px;font-size:24.00px;color:#646970;letter-spacing:0.129px;">Screen Options</span>
<span class="t" id="hp" style="left:2416.50px;top:70px;font-size:24.00px;color:#646970;letter-spacing:0.063px;">Help</span>
<span class="t" id="d7" style="left:1049.30px;top:231px;font-size:24.40px;color:#1a1a1a;letter-spacing:-0.313px;-webkit-text-stroke:0.30px #1a1a1a;">7 days</span>
<span class="t" id="st1" style="left:1204.10px;top:201px;font-size:24.00px;color:#616161;letter-spacing:0.064px;">Total orders</span>
<span class="t" id="sv1" style="left:1203.10px;top:260px;font-size:24.00px;color:#111;font-weight:700;letter-spacing:0.352px;">12</span>
<span class="t" id="st2" style="left:1501.20px;top:201px;font-size:24.00px;color:#616161;letter-spacing:0.023px;">Refunded</span>
<span class="t" id="sv2" style="left:1502.20px;top:260px;font-size:24.00px;color:#111;font-weight:700;">2</span>
<span class="t" id="st3" style="left:1786.90px;top:201px;font-size:24.00px;color:#616161;letter-spacing:0.386px;">Completed</span>
<span class="t" id="sv3" style="left:1788.70px;top:260px;font-size:24.00px;color:#111;font-weight:700;">3</span>
<span class="t" id="tb0a" style="left:505.70px;top:374px;font-size:25.00px;color:#1a1a1a;font-weight:700;letter-spacing:-0.900px;">All</span>
<span class="t" id="tb0c" style="left:544.40px;top:374px;font-size:25.00px;color:#545b62;letter-spacing:1.456px;">(39)</span>
<span class="t" id="tb1a" style="left:642.60px;top:374px;font-size:25.00px;color:#3b3b3b;letter-spacing:1.055px;-webkit-text-stroke:0.50px #3b3b3b;">Pending payment</span>
<span class="t" id="tb1c" style="left:861.60px;top:374px;font-size:25.00px;color:#545b62;letter-spacing:-0.065px;">(7)</span>
<span class="t" id="tb2a" style="left:942.20px;top:374px;font-size:25.00px;color:#3b3b3b;letter-spacing:1.148px;-webkit-text-stroke:0.50px #3b3b3b;">Processing</span>
<span class="t" id="tb2c" style="left:1084.20px;top:374px;font-size:25.00px;color:#545b62;letter-spacing:1.185px;">(6)</span>
<span class="t" id="tb3a" style="left:1167.50px;top:374px;font-size:25.00px;color:#3b3b3b;letter-spacing:1.140px;-webkit-text-stroke:0.50px #3b3b3b;">On hold</span>
<span class="t" id="tb3c" style="left:1269.50px;top:374px;font-size:25.00px;color:#545b62;letter-spacing:1.335px;">(3)</span>
<span class="t" id="tb4a" style="left:1353.30px;top:374px;font-size:25.00px;color:#3b3b3b;letter-spacing:1.238px;-webkit-text-stroke:0.50px #3b3b3b;">Completed</span>
<span class="t" id="tb4c" style="left:1492.80px;top:374px;font-size:25.00px;color:#545b62;letter-spacing:-0.511px;">(21)</span>
<span class="t" id="tb5a" style="left:1586.70px;top:374px;font-size:25.00px;color:#3b3b3b;letter-spacing:1.026px;-webkit-text-stroke:0.50px #3b3b3b;">Refunded</span>
<span class="t" id="tb5c" style="left:1711.50px;top:374px;font-size:25.00px;color:#545b62;letter-spacing:0.135px;">(2)</span>
<span class="t" id="tb6a" style="left:1792.70px;top:374px;font-size:25.00px;color:#3b3b3b;letter-spacing:1.793px;-webkit-text-stroke:0.50px #3b3b3b;">Draft</span>
<span class="t" id="tb6c" style="left:1864.00px;top:374px;font-size:25.00px;color:#545b62;letter-spacing:0.285px;">(2)</span>
<span class="t" id="tb7a" style="left:1947.30px;top:374px;font-size:25.00px;color:#3b3b3b;letter-spacing:0.557px;-webkit-text-stroke:0.50px #3b3b3b;">Trash</span>
<span class="t" id="tb7c" style="left:2021.90px;top:374px;font-size:25.00px;color:#545b62;letter-spacing:-1.315px;">(1)</span>
<span class="t" id="th1" style="left:572.60px;top:459px;font-size:22.00px;color:#5f5f5f;letter-spacing:1.123px;-webkit-text-stroke:0.45px #5f5f5f;">Order</span>
<span class="t" id="th2" style="left:1027.90px;top:459px;font-size:22.00px;color:#5f5f5f;letter-spacing:0.622px;-webkit-text-stroke:0.45px #5f5f5f;">Date</span>
<span class="t" id="th3" style="left:1223.80px;top:459px;font-size:22.00px;color:#5f5f5f;letter-spacing:1.086px;-webkit-text-stroke:0.45px #5f5f5f;">Status</span>
<span class="t" id="th4" style="left:1495.40px;top:459px;font-size:22.00px;color:#5f5f5f;letter-spacing:1.023px;-webkit-text-stroke:0.45px #5f5f5f;">Billing</span>
<span class="t" id="th5" style="left:1915.00px;top:459px;font-size:22.00px;color:#5f5f5f;letter-spacing:0.924px;-webkit-text-stroke:0.45px #5f5f5f;">Ship to</span>
<span class="t" id="th6" style="left:2450.40px;top:459px;font-size:22.00px;color:#5f5f5f;letter-spacing:1.104px;-webkit-text-stroke:0.45px #5f5f5f;">Total</span>
<span class="t" id="rn0" style="left:575.30px;top:572px;font-size:24.00px;color:#303030;font-weight:700;letter-spacing:-0.084px;">#192 Alexander Klein</span>
<span class="t" id="rd0" style="left:1029.10px;top:574px;font-size:24.00px;color:#50575e;letter-spacing:0.129px;">7 hours ago</span>
<span class="t" id="rs0" style="left:1240.40px;top:574px;font-size:24.00px;color:#5b841b;letter-spacing:0.747px;-webkit-text-stroke:0.45px #5b841b;">Processing</span>
<span class="t" id="rb0_0" style="left:1497.40px;top:539px;font-size:24.00px;color:#464b51;letter-spacing:0.034px;">Alexander Klein, Luckenwalder</span>
<span class="t" id="rb0_1" style="left:1497.40px;top:574px;font-size:24.00px;color:#464b51;letter-spacing:0.182px;">Strasse 66, 31135 Hildesheim,</span>
<span class="t" id="rb0_2" style="left:1497.40px;top:609px;font-size:24.00px;color:#464b51;">Germany</span>
<span class="t" id="rh0_0" style="left:1917.70px;top:539px;font-size:24.00px;color:#2271b1;letter-spacing:0.034px;">Alexander Klein, Luckenwalder</span>
<span class="t" id="rh0_1" style="left:1917.70px;top:574px;font-size:24.00px;color:#2271b1;letter-spacing:0.182px;">Strasse 66, 31135 Hildesheim,</span>
<span class="t" id="rh0_2" style="left:1917.70px;top:609px;font-size:24.00px;color:#2271b1;">Germany</span>
<span class="t" id="rt0" style="left:2436.40px;top:574px;font-size:24.00px;color:#50575e;letter-spacing:0.422px;">$2.48</span>
<span class="t" id="rn1" style="left:575.30px;top:743px;font-size:24.00px;color:#303030;font-weight:700;letter-spacing:-0.165px;">#189 Lâm Thị Kiều Chinh</span>
<span class="t" id="rd1" style="left:1029.10px;top:745px;font-size:24.00px;color:#50575e;letter-spacing:0.013px;">18 hours ago</span>
<span class="t" id="rs1" style="left:1240.40px;top:745px;font-size:24.00px;color:#2e4453;letter-spacing:1.011px;-webkit-text-stroke:0.45px #2e4453;">Completed</span>
<span class="t" id="rb1_0" style="left:1497.40px;top:693px;font-size:24.00px;color:#464b51;">Lâm Thị Kiều Chinh, 3125 Walt</span>
<span class="t" id="rb1_1" style="left:1497.40px;top:728px;font-size:24.00px;color:#464b51;letter-spacing:-0.131px;">Nuzum Farm Road, Rochester, NY</span>
<span class="t" id="rb1_2" style="left:1497.40px;top:762px;font-size:24.00px;color:#464b51;">14620</span>
<span class="t" id="rv1" style="left:1497.40px;top:797px;font-size:24.00px;color:#999;letter-spacing:0.026px;">via Cash on delivery</span>
<span class="t" id="rh1_0" style="left:1917.70px;top:710px;font-size:24.00px;color:#2271b1;">Lâm Thị Kiều Chinh, 3125 Walt</span>
<span class="t" id="rh1_1" style="left:1917.70px;top:745px;font-size:24.00px;color:#2271b1;letter-spacing:-0.131px;">Nuzum Farm Road, Rochester, NY</span>
<span class="t" id="rh1_2" style="left:1917.70px;top:780px;font-size:24.00px;color:#2271b1;">14620</span>
<span class="t" id="rt1" style="left:2437.70px;top:745px;font-size:24.00px;color:#50575e;letter-spacing:0.097px;">$2.25</span>
<span class="t" id="rn2" style="left:575.30px;top:932px;font-size:24.00px;color:#303030;font-weight:700;letter-spacing:-0.008px;">#175 Marisa Castro</span>
<span class="t" id="rd2" style="left:1029.10px;top:934px;font-size:24.00px;color:#50575e;letter-spacing:0.013px;">19 hours ago</span>
<span class="t" id="rs2" style="left:1240.40px;top:934px;font-size:24.00px;color:#2e4453;letter-spacing:1.011px;-webkit-text-stroke:0.45px #2e4453;">Completed</span>
<span class="t" id="rb2_0" style="left:1497.40px;top:882px;font-size:24.00px;color:#464b51;letter-spacing:-0.070px;">Marisa Castro, Rua Rio Madeira,</span>
<span class="t" id="rb2_1" style="left:1497.40px;top:916px;font-size:24.00px;color:#464b51;letter-spacing:-0.073px;">1229, Santo André, São Paulo,</span>
<span class="t" id="rb2_2" style="left:1497.40px;top:951px;font-size:24.00px;color:#464b51;">09133-150, Brazil</span>
<span class="t" id="rv2" style="left:1497.40px;top:986px;font-size:24.00px;color:#999;letter-spacing:0.026px;">via Cash on delivery</span>
<span class="t" id="rh2_0" style="left:1917.70px;top:899px;font-size:24.00px;color:#2271b1;letter-spacing:-0.070px;">Marisa Castro, Rua Rio Madeira,</span>
<span class="t" id="rh2_1" style="left:1917.70px;top:934px;font-size:24.00px;color:#2271b1;letter-spacing:-0.073px;">1229, Santo André, São Paulo,</span>
<span class="t" id="rh2_2" style="left:1917.70px;top:968px;font-size:24.00px;color:#2271b1;">09133-150, Brazil</span>
<span class="t" id="rx2" style="left:2342.20px;top:933px;font-size:24.00px;color:#999;">–</span>
<span class="t" id="rt2" style="left:2436.40px;top:934px;font-size:24.00px;color:#50575e;letter-spacing:0.422px;">$6.60</span>
<span class="t" id="rn3" style="left:575.30px;top:1103px;font-size:24.00px;color:#303030;font-weight:700;letter-spacing:-0.073px;">#182 Senay Kinfe</span>
<span class="t" id="rd3" style="left:1030.10px;top:1105px;font-size:24.00px;color:#50575e;letter-spacing:0.290px;">Aug 3, 2024</span>
<span class="t" id="rs3" style="left:1240.40px;top:1105px;font-size:24.00px;color:#5b841b;letter-spacing:0.747px;-webkit-text-stroke:0.45px #5b841b;">Processing</span>
<span class="t" id="rb3_0" style="left:1497.40px;top:1070px;font-size:24.00px;color:#464b51;letter-spacing:-0.016px;">Senay Kinfe, 1347 Crown St,</span>
<span class="t" id="rb3_1" style="left:1497.40px;top:1105px;font-size:24.00px;color:#464b51;letter-spacing:0.257px;">Carletonville, Gauteng, 2499,</span>
<span class="t" id="rb3_2" style="left:1497.40px;top:1140px;font-size:24.00px;color:#464b51;">South Africa</span>
<span class="t" id="rh3_0" style="left:1917.70px;top:1070px;font-size:24.00px;color:#2271b1;letter-spacing:-0.016px;">Senay Kinfe, 1347 Crown St,</span>
<span class="t" id="rh3_1" style="left:1917.70px;top:1105px;font-size:24.00px;color:#2271b1;letter-spacing:0.257px;">Carletonville, Gauteng, 2499,</span>
<span class="t" id="rh3_2" style="left:1917.70px;top:1140px;font-size:24.00px;color:#2271b1;">South Africa</span>
<span class="t" id="rx3" style="left:2342.20px;top:1104px;font-size:24.00px;color:#999;">–</span>
<span class="t" id="rt3" style="left:2421.80px;top:1105px;font-size:24.00px;color:#50575e;letter-spacing:0.588px;">$42.90</span>
<span class="t" id="rn4" style="left:575.30px;top:1257px;font-size:24.00px;color:#303030;font-weight:700;letter-spacing:-0.124px;">#181 Ormazd Bédard</span>
<span class="t" id="rd4" style="left:1030.10px;top:1259px;font-size:24.00px;color:#50575e;letter-spacing:0.290px;">Aug 3, 2024</span>
<span class="t" id="rs4" style="left:1240.40px;top:1259px;font-size:24.00px;color:#94660c;letter-spacing:0.682px;-webkit-text-stroke:0.45px #94660c;">On hold</span>
<span class="t" id="rb4_0" style="left:1497.40px;top:1224px;font-size:24.00px;color:#464b51;letter-spacing:-0.109px;">Ormazd Bédard, 41, Rue Marie De</span>
<span class="t" id="rb4_1" style="left:1497.40px;top:1259px;font-size:24.00px;color:#464b51;letter-spacing:-0.342px;">Médicis, 11000 CARCASSONNE,</span>
<span class="t" id="rb4_2" style="left:1497.40px;top:1293px;font-size:24.00px;color:#464b51;">France</span>
<span class="t" id="rh4_0" style="left:1917.70px;top:1224px;font-size:24.00px;color:#2271b1;letter-spacing:-0.109px;">Ormazd Bédard, 41, Rue Marie De</span>
<span class="t" id="rh4_1" style="left:1917.70px;top:1259px;font-size:24.00px;color:#2271b1;letter-spacing:-0.342px;">Médicis, 11000 CARCASSONNE,</span>
<span class="t" id="rh4_2" style="left:1917.70px;top:1293px;font-size:24.00px;color:#2271b1;">France</span>
<span class="t" id="rx4" style="left:2342.20px;top:1258px;font-size:24.00px;color:#999;">–</span>
<span class="t" id="rt4" style="left:2426.00px;top:1259px;font-size:24.00px;color:#50575e;letter-spacing:-0.252px;">$77.00</span>
<span class="t" id="rn5" style="left:575.30px;top:1410px;font-size:24.00px;color:#303030;font-weight:700;letter-spacing:-0.142px;">#190 Caio Alves Cardoso</span>
<span class="t" id="rd5" style="left:1030.10px;top:1412px;font-size:24.00px;color:#50575e;letter-spacing:0.290px;">Aug 3, 2024</span>
<span class="t" id="rs5" style="left:1240.40px;top:1412px;font-size:24.00px;color:#5b841b;letter-spacing:0.747px;-webkit-text-stroke:0.45px #5b841b;">Processing</span>
<span class="t" id="rb5_0" style="left:1497.40px;top:1377px;font-size:24.00px;color:#464b51;letter-spacing:-0.070px;">Caio Alves Cardoso, Rua Víctor da</span>
<span class="t" id="rb5_1" style="left:1497.40px;top:1412px;font-size:24.00px;color:#464b51;letter-spacing:0.011px;">Anunciação, 424, Campinas, São</span>
<span class="t" id="rb5_2" style="left:1497.40px;top:1447px;font-size:24.00px;color:#464b51;">Paulo, 13098-325, Brazil</span>
<span class="t" id="rh5_0" style="left:1917.70px;top:1377px;font-size:24.00px;color:#2271b1;letter-spacing:-0.070px;">Caio Alves Cardoso, Rua Víctor da</span>
<span class="t" id="rh5_1" style="left:1917.70px;top:1412px;font-size:24.00px;color:#2271b1;letter-spacing:0.011px;">Anunciação, 424, Campinas, São</span>
<span class="t" id="rh5_2" style="left:1917.70px;top:1447px;font-size:24.00px;color:#2271b1;">Paulo, 13098-325, Brazil</span>
<span class="t" id="rx5" style="left:2342.20px;top:1411px;font-size:24.00px;color:#999;">–</span>
<span class="t" id="rt5" style="left:2439.80px;top:1412px;font-size:24.00px;color:#50575e;letter-spacing:-0.428px;">$4.14</span>
</div>
</body></html>
